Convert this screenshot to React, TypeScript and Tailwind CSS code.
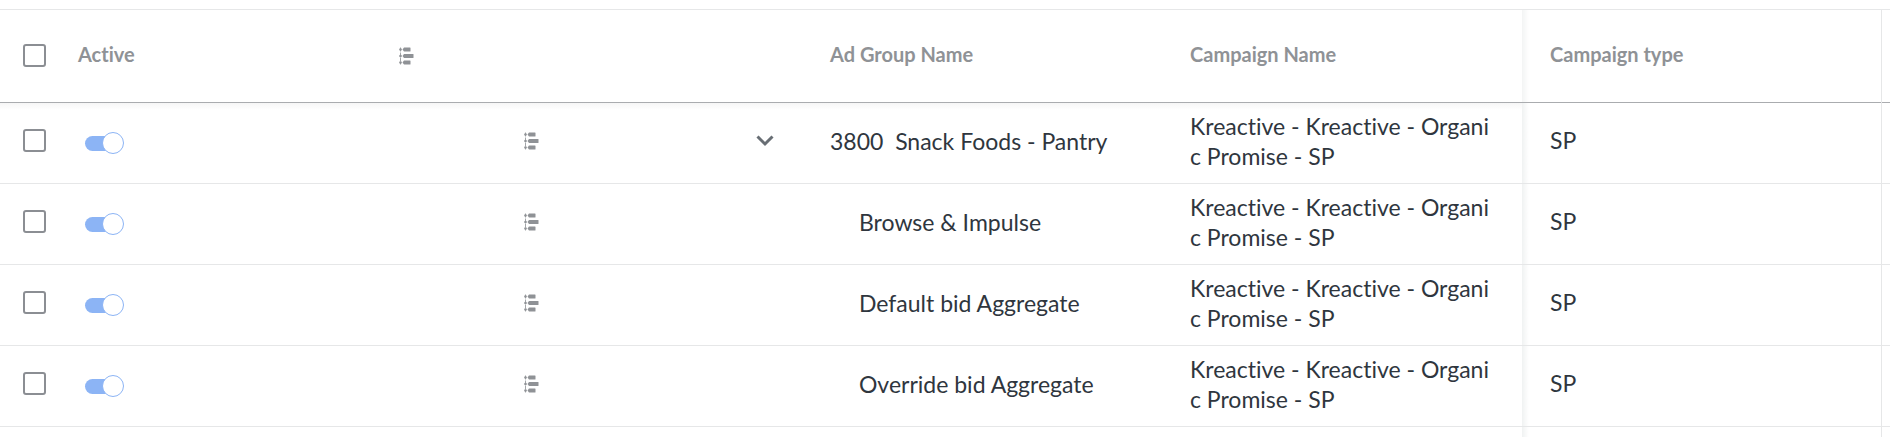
import clsx from "clsx";

interface AdGroup {
  name: string;
  campaign: string;
  type: string;
  parent?: boolean;
}

const campaign = "Kreactive - Kreactive - Organic Promise - SP";

const adGroups: AdGroup[] = [
  { name: "3800\u00a0 Snack Foods - Pantry", campaign, type: "SP", parent: true },
  { name: "Browse & Impulse", campaign, type: "SP" },
  { name: "Default bid Aggregate", campaign, type: "SP" },
  { name: "Override bid Aggregate", campaign, type: "SP" },
];

function TimelineIcon() {
  return (
    <svg width="16" height="18" viewBox="0 0 16 18" className="block" fill="#8f9296" aria-hidden="true">
      <path d="M2.5 0.5V17.5" stroke="#a3a6a9" strokeWidth="1" strokeDasharray="4 1" />
      <circle cx="2.5" cy="2.5" r="1.3" />
      <circle cx="2.5" cy="9" r="1.3" />
      <circle cx="2.5" cy="15.5" r="1.3" />
      <path d="M4.5 2.5L6 0.5H12Q12.5 0.5 12.5 1V4Q12.5 4.5 12 4.5H6Z" />
      <path d="M4.5 9L6 7H15Q15.5 7 15.5 7.5V10.5Q15.5 11 15 11H6Z" />
      <path d="M4.5 15.5L6 13.5H12Q12.5 13.5 12.5 14V17Q12.5 17.5 12 17.5H6Z" />
    </svg>
  );
}

function Checkbox({ label }: { label: string }) {
  return (
    <input
      type="checkbox"
      aria-label={label}
      className="block size-[23px] appearance-none rounded-[3px] border-2 border-[#8b8e93] bg-white checked:bg-[#8b8e93]"
    />
  );
}

function Toggle({ label }: { label: string }) {
  return (
    <label className="relative flex h-[22px] w-[39px] cursor-pointer items-center">
      <input type="checkbox" role="switch" defaultChecked aria-label={label} className="peer sr-only" />
      <span className="h-[15px] w-[34px] rounded-full bg-gray-300 peer-checked:bg-[#8cb4f5]" />
      <span className="absolute left-0 top-0 size-[22px] rounded-full border border-gray-300 bg-white peer-checked:left-[17px] peer-checked:border-[#8cb4f5]" />
    </label>
  );
}

function AdGroupRow({ group, first }: { group: AdGroup; first: boolean }) {
  return (
    <tr
      className={clsx(
        "h-[81px] border-b border-[#e6e7e8]",
        first && "bg-linear-to-b from-[#f6f6f6] to-white to-[7px]"
      )}
    >
      <td className="pb-1.5 pl-[23px]">
        <Checkbox label={`Select ${group.name}`} />
      </td>
      <td className="pl-[31px]">
        <Toggle label={`${group.name} active`} />
      </td>
      <td className="pb-1">
        <button type="button" aria-label="Show timeline" className="mx-auto block">
          <TimelineIcon />
        </button>
      </td>
      <td className="pb-1 pr-8">
        {group.parent && (
          <button type="button" aria-label="Collapse group" className="ml-auto block">
            <svg width="18" height="12" viewBox="0 0 18 12" fill="none" stroke="#686e74" strokeWidth="3" aria-hidden="true">
              <path d="M1.5 1.5L9 9L16.5 1.5" />
            </svg>
          </button>
        )}
      </td>
      <td className={clsx("whitespace-nowrap pb-1", group.parent ? "pl-6" : "pl-[53px]")}>{group.name}</td>
      <td className="break-all pb-1 pl-6 pr-6">{group.campaign}</td>
      <td className="bg-linear-to-r from-[#f0f2f2] to-white to-[7px] pb-1.5 pl-7">{group.type}</td>
      <td className="border-l border-[#e6e7e8] bg-white" />
    </tr>
  );
}

export default function App() {
  return (
    <main className="overflow-hidden bg-white pt-[9px] font-['Lato','Liberation_Sans',sans-serif] text-[#2f363e] [font-variant-ligatures:none]">
      <table className="w-full table-fixed border-collapse text-left text-[23px] leading-[30px]">
        <colgroup>
          <col className="w-[54px]" />
          <col />
          <col className="w-[314px]" />
          <col className="w-[118px]" />
          <col className="w-[360px]" />
          <col className="w-[356px]" />
          <col className="w-[359px]" />
          <col className="w-[9px]" />
        </colgroup>
        <thead className="text-[20px] leading-6 text-[#8f9296]">
          <tr className="h-[93px] border-b border-t border-b-[#aaacaf] border-t-[#e6e7e8]">
            <th className="pb-0.5 pl-[23px]">
              <Checkbox label="Select all ad groups" />
            </th>
            <th className="pb-1 pl-6">Active</th>
            <th className="pl-6" aria-label="Timeline">
              <TimelineIcon />
            </th>
            <th aria-label="Expand" />
            <th className="pb-1 pl-6">Ad Group Name</th>
            <th className="pb-1 pl-6">Campaign Name</th>
            <th className="bg-linear-to-r from-[#f3f4f4] to-white to-[7px] pb-1 pl-7">Campaign type</th>
            <th className="border-l border-[#e6e7e8]" />
          </tr>
        </thead>
        <tbody>
          {adGroups.map((group, index) => (
            <AdGroupRow key={group.name} group={group} first={index === 0} />
          ))}
        </tbody>
        <tfoot>
          <tr className="h-[10px]">
            <td colSpan={6} />
            <td className="bg-linear-to-r from-[#f0f2f2] to-white to-[7px]" />
            <td className="border-l border-[#e6e7e8]" />
          </tr>
        </tfoot>
      </table>
    </main>
  );
}
